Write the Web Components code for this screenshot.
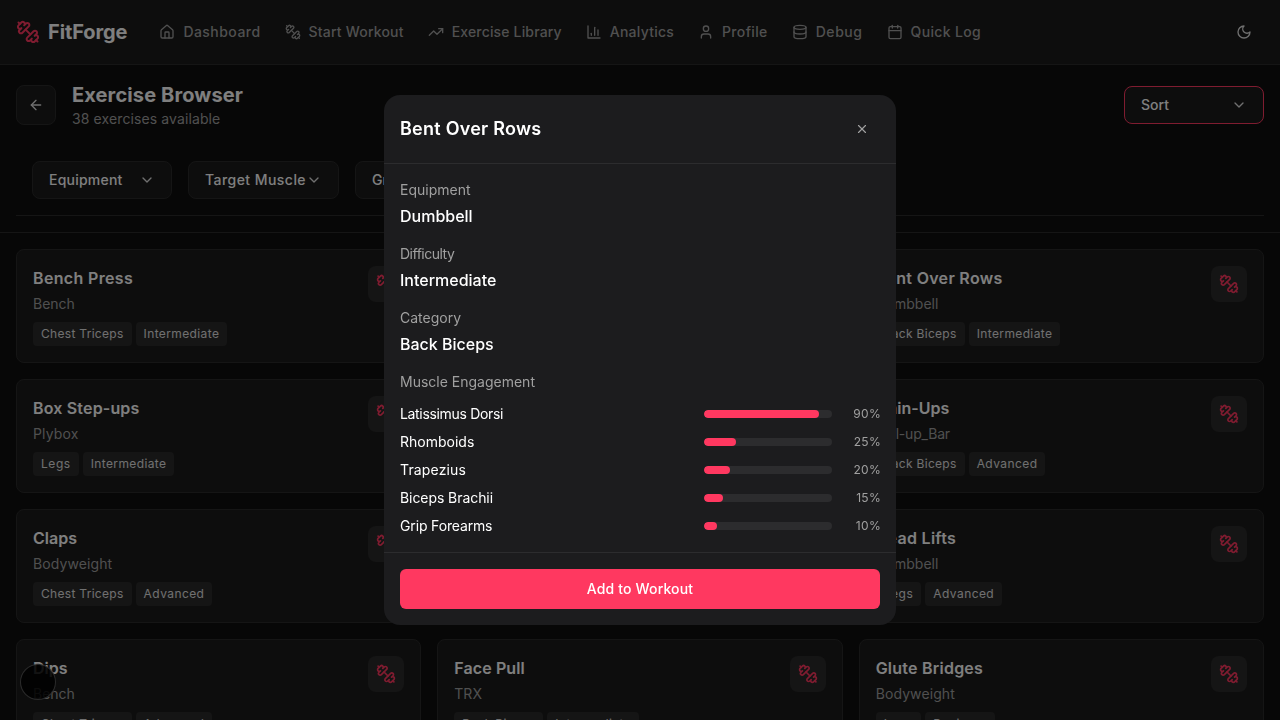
<!DOCTYPE html>
<html lang="en">
<head>
<meta charset="utf-8">
<title>FitForge</title>
<style>
  html, body { margin: 0; height: 100%; overflow: hidden; background: #0f0f0f; }
  body { font-family: Inter, "Liberation Sans", sans-serif; color: #fff; }
</style>
</head>
<body>
<ff-app></ff-app>

<script>
const icons = {
  dumbbell: '<path d="M14.4 14.4 9.6 9.6"/><path d="M18.657 21.485a2 2 0 1 1-2.829-2.828l-1.767 1.768a2 2 0 1 1-2.829-2.829l6.364-6.364a2 2 0 1 1 2.829 2.829l-1.768 1.767a2 2 0 1 1 2.828 2.829z"/><path d="m21.5 21.5-1.4-1.4"/><path d="M3.9 3.9 2.5 2.5"/><path d="M6.404 12.768a2 2 0 1 1-2.829-2.829l1.768-1.767a2 2 0 1 1-2.828-2.829l2.828-2.828a2 2 0 1 1 2.829 2.828l1.767-1.768a2 2 0 1 1 2.829 2.829z"/>',
  home: '<path d="M15 21v-8a1 1 0 0 0-1-1h-4a1 1 0 0 0-1 1v8"/><path d="M3 10a2 2 0 0 1 .709-1.528l7-5.999a2 2 0 0 1 2.582 0l7 5.999A2 2 0 0 1 21 10v9a2 2 0 0 1-2 2H5a2 2 0 0 1-2-2z"/>',
  trending: '<path d="M16 7h6v6"/><path d="m22 7-8.5 8.5-5-5L2 17"/>',
  chart: '<path d="M3 3v18h18"/><path d="M18 17V9"/><path d="M13 17V5"/><path d="M8 17v-3"/>',
  user: '<path d="M19 21v-2a4 4 0 0 0-4-4H9a4 4 0 0 0-4 4v2"/><circle cx="12" cy="7" r="4"/>',
  database: '<ellipse cx="12" cy="5" rx="9" ry="3"/><path d="M3 5V19A9 3 0 0 0 21 19V5"/><path d="M3 12A9 3 0 0 0 21 12"/>',
  calendar: '<path d="M8 2v4"/><path d="M16 2v4"/><rect width="18" height="18" x="3" y="4" rx="2"/><path d="M3 10h18"/>',
  moon: '<path d="M12 3a6 6 0 0 0 9 9 9 9 0 1 1-9-9Z"/>',
  back: '<path d="m12 19-7-7 7-7"/><path d="M19 12H5"/>',
  chevron: '<path d="m6 9 6 6 6-6"/>',
  close: '<path d="M18 6 6 18"/><path d="m6 6 12 12"/>',
}

// tracking per tag label, the reference font runs a bit wider on some words
const tagSpacing = { Intermediate: 0.38, Legs: 0.55, Advanced: 0.42 }

class FfElement extends HTMLElement {
  constructor() {
    super()
    this.attachShadow({ mode: 'open' })
  }

  connectedCallback() {
    this.shadowRoot.innerHTML = this.render()
  }

  ls(fallback = 0) {
    return `${this.getAttribute('ls') || fallback}px`
  }
}

class FfIcon extends FfElement {
  render() {
    const size = this.getAttribute('size') || 16
    return `
      <style>
        :host { display: inline-flex; flex: none; width: ${size}px; height: ${size}px; }
        svg { display: block; }
      </style>
      <svg xmlns="http://www.w3.org/2000/svg" width="${size}" height="${size}" viewBox="0 0 24 24" fill="none" stroke="currentColor" stroke-width="2" stroke-linecap="round" stroke-linejoin="round">${icons[this.getAttribute('name')]}</svg>
    `
  }
}

class FfNavLink extends FfElement {
  render() {
    return `
      <style>
        :host { display: flex; align-items: center; gap: 8px; color: #a0a0a0; font-size: 14px; line-height: 20px; font-weight: 500; letter-spacing: ${this.ls(0.35)}; white-space: nowrap; }
      </style>
      <ff-icon name="${this.getAttribute('icon')}"></ff-icon>
      <slot></slot>
    `
  }
}

class FfNav extends FfElement {
  render() {
    return `
      <style>
        :host { display: flex; align-items: center; height: 64px; padding: 0 16px; background: #1a1a1a; border-bottom: 1px solid #2a2a2a; }
        .brand { display: flex; align-items: center; gap: 8px; color: #ff3860; margin-right: 32px; }
        .brand span { color: #fff; font-size: 20px; line-height: 28px; font-weight: 700; letter-spacing: -0.1px; }
        .links { display: flex; gap: 24px; flex: 1; }
        .theme { display: flex; align-items: center; justify-content: center; width: 40px; height: 40px; color: #e0e0e0; }
      </style>
      <div class="brand"><ff-icon name="dumbbell" size="24"></ff-icon><span>FitForge</span></div>
      <div class="links">
        <ff-nav-link icon="home" ls="0.46">Dashboard</ff-nav-link>
        <ff-nav-link icon="dumbbell" ls="0.2">Start Workout</ff-nav-link>
        <ff-nav-link icon="trending" ls="0.16">Exercise Library</ff-nav-link>
        <ff-nav-link icon="chart" ls="0.24">Analytics</ff-nav-link>
        <ff-nav-link icon="user">Profile</ff-nav-link>
        <ff-nav-link icon="database" ls="0.55">Debug</ff-nav-link>
        <ff-nav-link icon="calendar">Quick Log</ff-nav-link>
      </div>
      <div class="theme"><ff-icon name="moon"></ff-icon></div>
    `
  }
}

class FfSelect extends FfElement {
  render() {
    return `
      <style>
        :host { display: flex; align-items: center; justify-content: space-between; box-sizing: border-box; min-width: 140px; height: 38px; padding: 0 16px; background: #1a1a1a; border: 1px solid #2a2a2a; border-radius: 8px; color: #fff; font-size: 14px; line-height: 20px; font-weight: 500; letter-spacing: ${this.ls()}; white-space: nowrap; }
        :host([accent]) { border-color: #ff3860; }
        ff-icon { color: #e0e0e0; }
      </style>
      <span><slot></slot></span>
      <ff-icon name="chevron"></ff-icon>
    `
  }
}

class FfHeader extends FfElement {
  render() {
    return `
      <style>
        :host { display: block; padding: 16px 16px 16px; border-bottom: 1px solid #2a2a2a; }
        .top { display: flex; align-items: center; gap: 16px; }
        .back { display: flex; align-items: center; justify-content: center; box-sizing: border-box; width: 40px; height: 40px; background: #1a1a1a; border: 1px solid #2a2a2a; border-radius: 8px; color: #e0e0e0; }
        .titles { flex: 1; }
        h1 { margin: 0; font-size: 20px; line-height: 28px; font-weight: 700; letter-spacing: 0.12px; color: #fff; }
        p { margin: 0; font-size: 14px; line-height: 20px; letter-spacing: 0.11px; color: #a0a0a0; }
        .filters { display: flex; gap: 16px; margin-top: 16px; padding: 16px; border-bottom: 1px solid #2a2a2a; }
      </style>
      <div class="top">
        <div class="back"><ff-icon name="back"></ff-icon></div>
        <div class="titles">
          <h1>Exercise Browser</h1>
          <p>38 exercises available</p>
        </div>
        <ff-select accent>Sort</ff-select>
      </div>
      <div class="filters">
        <ff-select ls="0.22">Equipment</ff-select>
        <ff-select ls="0.45">Target Muscle</ff-select>
        <ff-select>Group</ff-select>
      </div>
    `
  }
}

class FfCard extends FfElement {
  render() {
    const tags = (this.getAttribute('tags') || '').split('|').filter(Boolean)
    const name = this.getAttribute('name')
    return `
      <style>
        :host { display: block; box-sizing: border-box; height: 114px; padding: 16px; background: #1a1a1a; border: 1px solid #2a2a2a; border-radius: 8px; }
        .row { display: flex; justify-content: space-between; }
        .main { min-width: 0; }
        h3 { margin: 0; font-size: 16px; line-height: 24px; font-weight: 600; letter-spacing: ${this.ls()}; color: #fff; }
        p { margin: 4px 0 0; font-size: 14px; line-height: 20px; letter-spacing: ${this.getAttribute('sub-ls') || 0}px; color: #a0a0a0; }
        .tags { display: flex; gap: 4px; margin-top: 8px; }
        .tag { padding: 0 8px; background: #2a2a2a; border-radius: 4px; color: #e0e0e0; font-size: 12px; line-height: 24px; letter-spacing: 0.3px; white-space: nowrap; }
        .badge { display: flex; align-items: center; justify-content: center; flex: none; width: 36px; height: 36px; background: #2a2a2a; border-radius: 8px; color: #ff3860; }
      </style>
      ${name ? `
      <div class="row">
        <div class="main">
          <h3>${name}</h3>
          <p>${this.getAttribute('equipment')}</p>
          <div class="tags">${tags.map(t => `<span class="tag" style="letter-spacing:${tagSpacing[t] || 0.3}px">${t}</span>`).join('')}</div>
        </div>
        <div class="badge"><ff-icon name="dumbbell" size="20"></ff-icon></div>
      </div>` : ''}
    `
  }
}

class FfGrid extends FfElement {
  render() {
    return `
      <style>
        :host { display: grid; grid-template-columns: repeat(3, 1fr); gap: 16px; padding: 16px; }
      </style>
      <slot></slot>
    `
  }
}

class FfMuscle extends FfElement {
  render() {
    const pct = this.getAttribute('pct')
    return `
      <style>
        :host { display: flex; align-items: center; height: 20px; font-size: 14px; line-height: 20px; color: #fff; }
        .name { flex: 1; letter-spacing: ${this.ls()}; }
        .track { width: 128px; height: 8px; background: #2c2c2e; border-radius: 4px; overflow: hidden; }
        .fill { height: 100%; width: ${pct}%; background: #ff3860; border-radius: 4px; }
        .pct { width: 49px; margin-right: -1px; text-align: right; font-size: 12px; letter-spacing: 0.3px; color: #a0a0a0; }
      </style>
      <span class="name"><slot></slot></span>
      <div class="track"><div class="fill"></div></div>
      <span class="pct">${pct}%</span>
    `
  }
}

class FfModal extends FfElement {
  render() {
    return `
      <style>
        :host { position: fixed; inset: 0; display: flex; align-items: center; justify-content: center; background: rgba(0, 0, 0, 0.5); }
        .dialog { box-sizing: border-box; width: 512px; height: 530px; background: #1c1c1e; border-radius: 16px; overflow: hidden; }
        header { display: flex; align-items: center; justify-content: space-between; padding: 16px; border-bottom: 1px solid #2c2c2e; }
        h2 { margin: 0; font-size: 18px; line-height: 28px; font-weight: 600; letter-spacing: 0.25px; color: #fff; }
        .close { display: flex; align-items: center; justify-content: center; width: 36px; height: 36px; color: #a0a0a0; }
        .body { display: flex; flex-direction: column; gap: 16px; padding: 16px; }
        .label { font-size: 14px; line-height: 20px; color: #a0a0a0; }
        .value { margin-top: 4px; font-size: 16px; line-height: 24px; font-weight: 500; color: #fff; }
        .muscles { display: flex; flex-direction: column; gap: 8px; margin-top: 12px; }
        footer { padding: 16px; border-top: 1px solid #2c2c2e; }
        .add { display: flex; align-items: center; justify-content: center; box-sizing: border-box; height: 40px; padding-bottom: 2px; background: #ff3860; border-radius: 6px; font-size: 14px; font-weight: 500; letter-spacing: 0.15px; color: #fff; }
      </style>
      <div class="dialog">
        <header>
          <h2>Bent Over Rows</h2>
          <div class="close"><ff-icon name="close" size="14"></ff-icon></div>
        </header>
        <div class="body">
          <div><div class="label">Equipment</div><div class="value">Dumbbell</div></div>
          <div><div class="label" style="letter-spacing:-0.5px">Difficulty</div><div class="value">Intermediate</div></div>
          <div><div class="label">Category</div><div class="value">Back Biceps</div></div>
          <div>
            <div class="label">Muscle Engagement</div>
            <div class="muscles">
              <ff-muscle pct="90" ls="-0.33">Latissimus Dorsi</ff-muscle>
              <ff-muscle pct="25">Rhomboids</ff-muscle>
              <ff-muscle pct="20" ls="0.15">Trapezius</ff-muscle>
              <ff-muscle pct="15" ls="-0.07">Biceps Brachii</ff-muscle>
              <ff-muscle pct="10" ls="-0.15">Grip Forearms</ff-muscle>
            </div>
          </div>
        </div>
        <footer><div class="add">Add to Workout</div></footer>
      </div>
    `
  }
}

class FfDevtools extends FfElement {
  render() {
    return `
      <style>
        :host { position: fixed; left: 20px; top: 664px; box-sizing: border-box; width: 36px; height: 36px; border-radius: 50%; background: rgba(0, 0, 0, 0.85); border: 1px solid rgba(255, 255, 255, 0.16); }
      </style>
    `
  }
}

class FfApp extends FfElement {
  render() {
    return `
      <style>
        :host { display: block; background: #0f0f0f; }
      </style>
      <ff-nav></ff-nav>
      <ff-header></ff-header>
      <ff-grid>
        <ff-card name="Bench Press" ls="0.34" equipment="Bench" tags="Chest Triceps|Intermediate"></ff-card>
        <ff-card></ff-card>
        <ff-card name="Bent Over Rows" ls="0.3" equipment="Dumbbell" tags="Back Biceps|Intermediate"></ff-card>
        <ff-card name="Box Step-ups" ls="0.17" equipment="Plybox" sub-ls="0.15" tags="Legs|Intermediate"></ff-card>
        <ff-card></ff-card>
        <ff-card name="Chin-Ups" equipment="Pull-up_Bar" sub-ls="-0.2" tags="Back Biceps|Advanced"></ff-card>
        <ff-card name="Claps" equipment="Bodyweight" sub-ls="0.1" tags="Chest Triceps|Advanced"></ff-card>
        <ff-card></ff-card>
        <ff-card name="Dead Lifts" ls="0.3" equipment="Dumbbell" tags="Legs|Advanced"></ff-card>
        <ff-card name="Dips" equipment="Bench" tags="Chest Triceps|Advanced"></ff-card>
        <ff-card name="Face Pull" ls="0.1" equipment="TRX" tags="Back Biceps|Intermediate"></ff-card>
        <ff-card name="Glute Bridges" ls="0.23" equipment="Bodyweight" sub-ls="0.1" tags="Legs|Beginner"></ff-card>
      </ff-grid>
      <ff-modal></ff-modal>
      <ff-devtools></ff-devtools>
    `
  }
}

customElements.define('ff-icon', FfIcon)
customElements.define('ff-nav-link', FfNavLink)
customElements.define('ff-nav', FfNav)
customElements.define('ff-select', FfSelect)
customElements.define('ff-header', FfHeader)
customElements.define('ff-card', FfCard)
customElements.define('ff-grid', FfGrid)
customElements.define('ff-muscle', FfMuscle)
customElements.define('ff-modal', FfModal)
customElements.define('ff-devtools', FfDevtools)
customElements.define('ff-app', FfApp)
</script>
</body>
</html>
